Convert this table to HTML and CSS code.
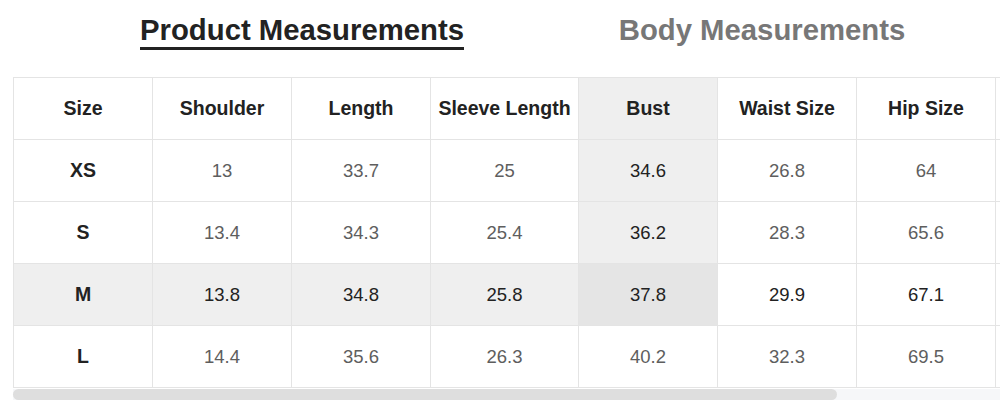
FILE: index.html
```html
<!DOCTYPE html>
<html lang="en">
<head>
<meta charset="utf-8">
<title>Size Chart</title>
<link rel="stylesheet" href="styles.css">
</head>
<body>
<div class="tabs">
  <div class="tab"><span class="tab-label active">Product Measurements</span></div>
  <div class="tab"><span class="tab-label">Body Measurements</span></div>
</div>
<div class="scroller">
  <table class="chart">
    <colgroup>
      <col class="c-std"><col class="c-std"><col class="c-std"><col class="c-wide"><col class="c-std"><col class="c-std"><col class="c-std"><col class="c-std">
    </colgroup>
    <thead>
      <tr>
        <th>Size</th><th>Shoulder</th><th>Length</th><th>Sleeve Length</th><th class="hl">Bust</th><th>Waist Size</th><th>Hip Size</th><th></th>
      </tr>
    </thead>
    <tbody>
      <tr>
        <td class="size">XS</td><td>13</td><td>33.7</td><td>25</td><td class="hl">34.6</td><td>26.8</td><td>64</td><td></td>
      </tr>
      <tr>
        <td class="size">S</td><td>13.4</td><td>34.3</td><td>25.4</td><td class="hl">36.2</td><td>28.3</td><td>65.6</td><td></td>
      </tr>
      <tr>
        <td class="size hl">M</td><td class="hl">13.8</td><td class="hl">34.8</td><td class="hl">25.8</td><td class="hlx">37.8</td><td class="dark">29.9</td><td class="dark">67.1</td><td class="dark"></td>
      </tr>
      <tr>
        <td class="size">L</td><td>14.4</td><td>35.6</td><td>26.3</td><td>40.2</td><td>32.3</td><td>69.5</td><td></td>
      </tr>
    </tbody>
  </table>
</div>
<div class="scrollbar"><div class="thumb"></div></div>
</body>
</html>
```

FILE: styles.css
```css
html, body {
  margin: 0;
  padding: 0;
  background: #ffffff;
}

body {
  font-family: "Liberation Sans", Arial, sans-serif;
  color: #222222;
}

.tabs {
  display: flex;
  padding-left: 72px;
  height: 77px;
  box-sizing: border-box;
}

.tab {
  width: 460px;
  text-align: center;
}

.tab-label {
  display: inline-block;
  margin-top: 13px;
  font-size: 29.3px;
  line-height: 33px;
  font-weight: bold;
  color: #777777;
  padding-bottom: 1px;
  border-bottom: 3px solid transparent;
}

.tab-label.active {
  color: #222222;
  border-bottom-color: #222222;
}

.scroller {
  margin-left: 13px;
  width: 987px;
  overflow: hidden;
}

.chart {
  border-collapse: collapse;
  table-layout: fixed;
  width: 1121px;
}

.c-std { width: 139px; }
.c-wide { width: 148px; }

.chart th,
.chart td {
  border: 1px solid #e4e4e4;
  height: 62px;
  padding: 0;
  text-align: center;
  vertical-align: middle;
  box-sizing: border-box;
}

.chart th {
  font-size: 19.5px;
  font-weight: bold;
  color: #222222;
}

.chart td {
  font-size: 18.5px;
  color: #5e5e5e;
}

.chart td.size {
  font-size: 19.5px;
  font-weight: bold;
  color: #222222;
}

.chart .hl {
  background: #efefef;
  color: #222222;
}

.chart .hlx {
  background: #e5e5e5;
  color: #222222;
}

.chart .dark {
  color: #222222;
}

.scrollbar {
  margin-left: 13px;
  margin-top: 1px;
  width: 987px;
  height: 11px;
  background: #f6f7f9;
}

.thumb {
  width: 824px;
  height: 11px;
  border-radius: 6px;
  background: #dedede;
}
```
